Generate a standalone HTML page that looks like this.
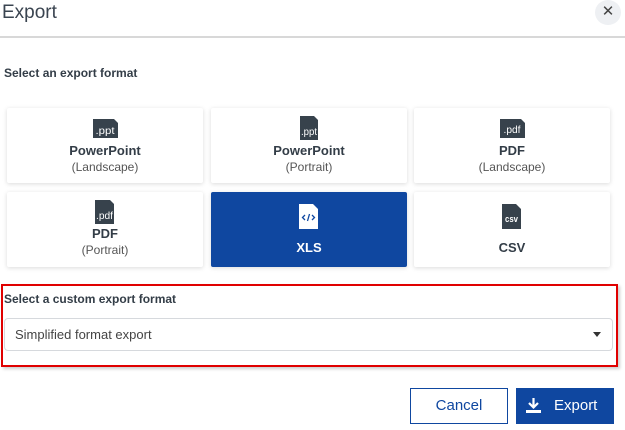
<!DOCTYPE html>
<html><head><style>
body{margin:0;width:625px;height:430px;background:#fff;font-family:"Liberation Sans",sans-serif;color:#333d47;position:relative;overflow:hidden}
.a{position:absolute}
.card{position:absolute;width:196px;height:75px;background:#fff;box-shadow:0 1px 5px rgba(0,0,0,.15);border-radius:2px;text-align:center}
.card b{position:absolute;left:0;right:0;font-size:13px;color:#333d47}
.card span{position:absolute;left:0;right:0;font-size:12px;color:#555}
.card svg{position:absolute}
.sel{background:#0f47a0}
.sel b{color:#fff}
svg text{font-family:"Liberation Sans Narrow","Liberation Sans",sans-serif}
</style></head><body>
<div class="a" style="left:2px;top:2px;font-size:19px;color:#3a4450">Export</div>
<div class="a" style="left:595px;top:0;width:26px;height:25px;border-radius:50%;background:#eef0f3;text-align:center;line-height:24px;font-size:15px;color:#444">✕</div>
<div class="a" style="left:0;top:36px;width:625px;height:2px;background:#d8d8d8"></div>
<div class="a" style="left:4px;top:66px;font-size:12px;font-weight:bold">Select an export format</div>

<div class="card" style="left:7px;top:108px">
<svg style="left:86px;top:11px" width="25" height="19" viewBox="0 0 25 19"><path d="M0 0H21L25 4V19H0Z" fill="#37424c"/><text x="12" y="15" font-size="10" fill="#fff" text-anchor="middle" textLength="19" lengthAdjust="spacingAndGlyphs">.ppt</text></svg>
<b style="top:35px">PowerPoint</b><span style="top:52px">(Landscape)</span></div>
<div class="card" style="left:211px;top:108px">
<svg style="left:89px;top:8px" width="18" height="24" viewBox="0 0 18 24"><path d="M0 0H14L18 4V24H0Z" fill="#37424c"/><text x="9" y="19" font-size="10" fill="#fff" text-anchor="middle" textLength="16" lengthAdjust="spacingAndGlyphs">.ppt</text></svg>
<b style="top:35px">PowerPoint</b><span style="top:52px">(Portrait)</span></div>
<div class="card" style="left:414px;top:108px">
<svg style="left:86px;top:11px" width="25" height="19" viewBox="0 0 25 19"><path d="M0 0H21L25 4V19H0Z" fill="#37424c"/><text x="12" y="14" font-size="10" fill="#fff" text-anchor="middle" textLength="17" lengthAdjust="spacingAndGlyphs">.pdf</text></svg>
<b style="top:35px">PDF</b><span style="top:52px">(Landscape)</span></div>

<div class="card" style="left:7px;top:192px">
<svg style="left:88px;top:8px" width="19" height="24" viewBox="0 0 19 24"><path d="M0 0H15L19 4V24H0Z" fill="#37424c"/><text x="9.5" y="19" font-size="10" fill="#fff" text-anchor="middle" textLength="17" lengthAdjust="spacingAndGlyphs">.pdf</text></svg>
<b style="top:34px">PDF</b><span style="top:51px">(Portrait)</span></div>
<div class="card sel" style="left:211px;top:192px">
<svg style="left:88px;top:12px" width="19" height="25" viewBox="0 0 19 25"><path d="M0 0H14L19 5V25H0Z" fill="#fff"/><path d="M6 11L3.5 13.5L6 16M13 11L15.5 13.5L13 16M10.5 10L8.5 17" stroke="#0f47a0" stroke-width="1.3" fill="none"/></svg>
<b style="top:48px">XLS</b></div>
<div class="card" style="left:414px;top:192px">
<svg style="left:88px;top:12px" width="19" height="25" viewBox="0 0 19 25"><path d="M0 0H14L19 5V25H0Z" fill="#37424c"/><text x="9.5" y="18" font-size="9" fill="#fff" text-anchor="middle" font-weight="bold" textLength="13" lengthAdjust="spacingAndGlyphs">csv</text></svg>
<b style="top:48px">CSV</b></div>

<div class="a" style="left:1px;top:284px;width:613px;height:79px;border:2px solid #e00000;box-shadow:2px 2px 3px rgba(0,0,0,.2)"></div>
<div class="a" style="left:4px;top:292px;font-size:12px;font-weight:bold">Select a custom export format</div>
<div class="a" style="left:4px;top:318px;width:607px;height:31px;border:1px solid #d6d9dd;border-radius:4px;background:#fff"></div>
<div class="a" style="left:15px;top:327px;font-size:13px;color:#444">Simplified format export</div>
<div class="a" style="left:593px;top:332px;width:0;height:0;border-left:4px solid transparent;border-right:4px solid transparent;border-top:5px solid #333"></div>

<div class="a" style="left:410px;top:388px;width:96px;height:34px;border:1px solid #0f47a0;text-align:center;line-height:34px;font-size:15px;color:#0f47a0">Cancel</div>
<div class="a" style="left:516px;top:388px;width:98px;height:36px;background:#0f47a0;color:#fff;font-size:15px;line-height:36px">
<svg style="position:absolute;left:10px;top:10px" width="15" height="16" viewBox="0 0 15 16"><path d="M7.5 0V9M3 5L7.5 9.5L12 5" stroke="#fff" stroke-width="2.2" fill="none"/><rect x="0" y="12" width="15" height="3" fill="#fff"/></svg>
<span style="position:absolute;left:38px">Export</span></div>
</body></html>
